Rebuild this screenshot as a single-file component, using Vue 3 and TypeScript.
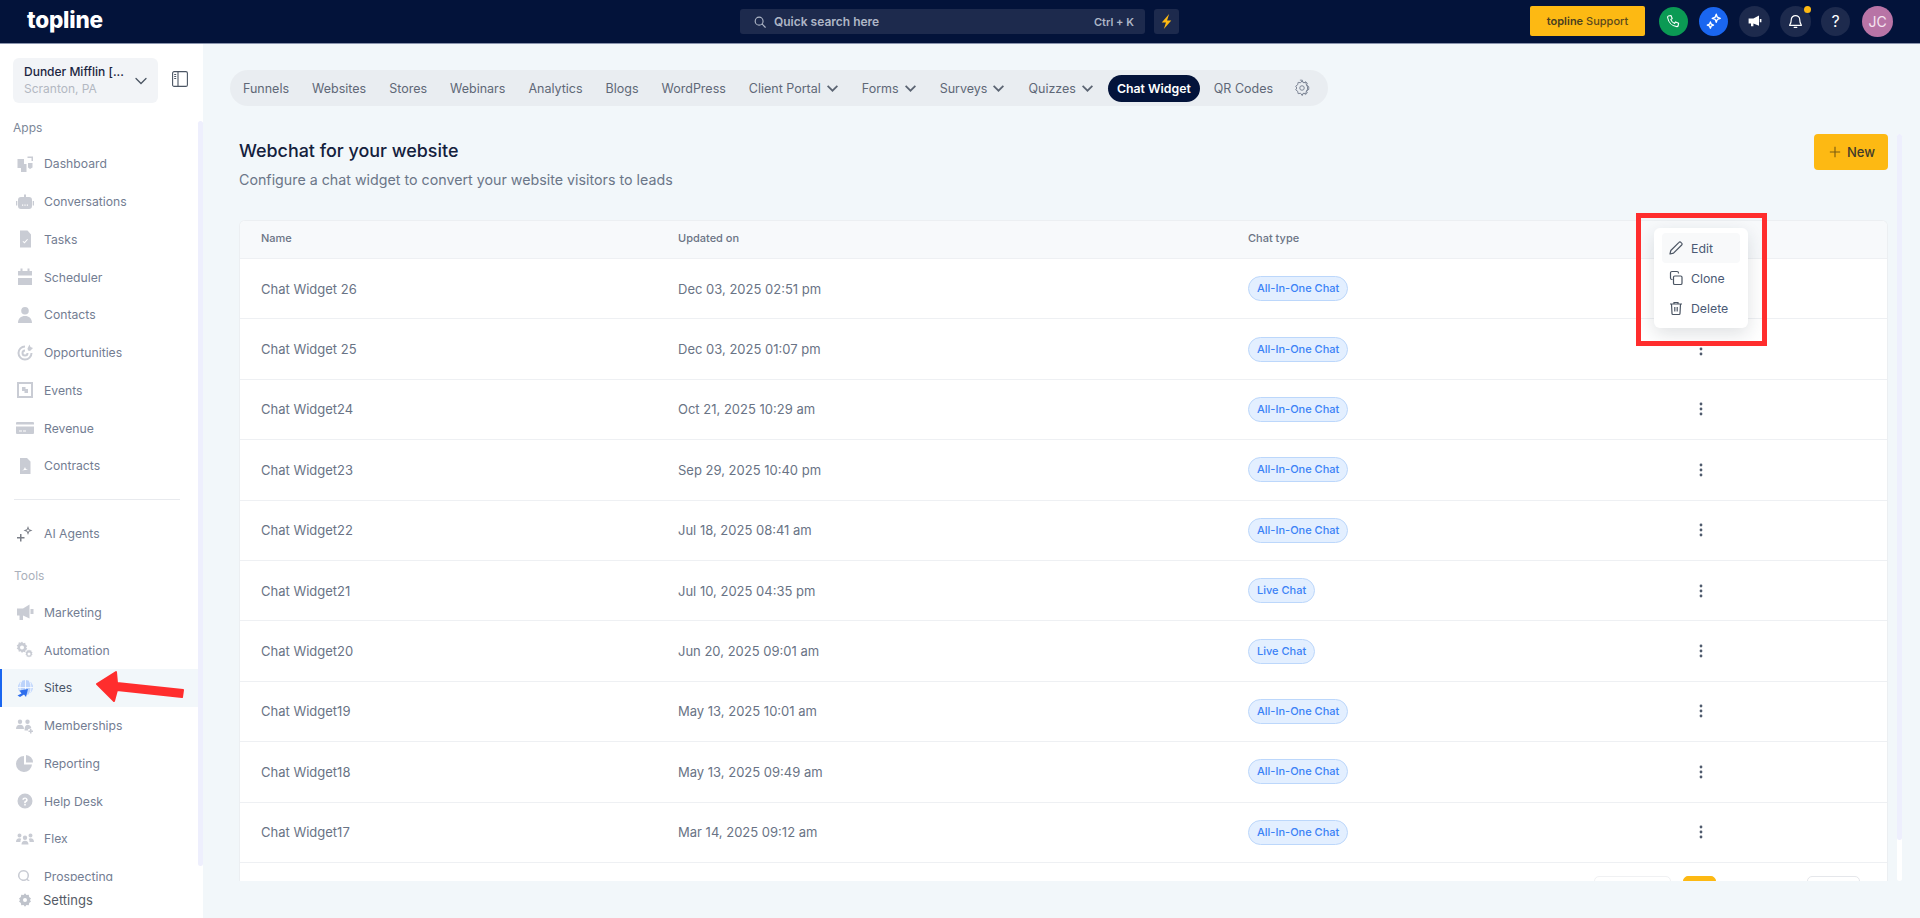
<script setup lang="ts">
type NavItem = { label: string; icon: string; active?: boolean };

const appItems: NavItem[] = [
  { label: 'Dashboard', icon: 'M2.500 5H9v5h2.500v8H6v-4H2.500zM12.500 2.500H18V7h-1.500V4h-4zM13 9h4.500v4.500L15 15l-2-1.500z' },
  { label: 'Conversations', icon: 'M9 2.500h2V5h3a3 3 0 0 1 3 3v6a3 3 0 0 1-3 3H6a3 3 0 0 1-3-3V8a3 3 0 0 1 3-3h3zM7 12.500v1.200h1.200v-1.200zM9.400 12.500v1.200h1.200v-1.200zM11.800 12.500v1.200H13v-1.200zM1 9h1.300v4.500H1zM17.700 9H19v4.500h-1.300z' },
  { label: 'Tasks', icon: 'M5 1.500h7.500L16 5.500v13H5zM7.500 12.500l2 2 3.500-4-.8-.6-2.800 3.200-1.200-1.200z' },
  { label: 'Scheduler', icon: 'M5.500 1.500h2V4h5V1.500h2V4H17v4.500H3V4h2.500zM3 11h14v7H3z' },
  { label: 'Contacts', icon: 'M10 2a3.800 3.800 0 1 1 0 7.600A3.800 3.800 0 0 1 10 2zM3 18c0-4.500 3-7 7-7s7 2.500 7 7z' },
  { label: 'Opportunities', icon: 'M10 2.500a7.500 7.500 0 1 0 7.500 7.500h-2A5.500 5.500 0 1 1 10 4.500zM10 6.500a3.500 3.500 0 1 0 3.500 3.500h-2a1.500 1.500 0 1 1-1.500-1.500zM14.500 1.500l1 2.500 2.500 1-3 3-2-.5-.5-2z' },
  { label: 'Events', icon: 'M2 2h16v16H2zM4 4v12h12V4zM7 7h3.500v2H13v4H9.500v-2H7z' },
  { label: 'Revenue', icon: 'M1 5a1 1 0 0 1 1-1h16a1 1 0 0 1 1 1v1.500H1zM1 8.500h18V15a1 1 0 0 1-1 1H2a1 1 0 0 1-1-1zM4 12.500v1h3v-1zM8 12.500v1h3v-1z' },
  { label: 'Contracts', icon: 'M5 2h7l3.500 3.500V18H5zM7 14.500c1.500-.5 2.500-2 3-3.500.5 1.500 1 2.500 3 3-2 0-4 0-6 .5z' },
];

const agentIcon =
  'M5 10v3H2v1.500h3v3h1.500v-3h3V13h-3v-3zM13 2l1.200 3.300L17.500 6.500l-3.300 1.200L13 11l-1.200-3.300L8.500 6.500l3.300-1.200zM13 4.800l-.6 1.100-1.100.6 1.100.6.6 1.100.6-1.100 1.100-.6-1.100-.6z';

const toolItems: NavItem[] = [
  { label: 'Marketing', icon: 'M2 6.500h6l6.500-4v14L8 13.500V18H4.500v-4.500H2zM15.500 7h3v5h-3z' },
  { label: 'Automation', icon: 'M7 1.500l1.200 1.700 2-.4.400 2 1.700 1.200-1.200 1.500 1.200 1.500-1.700 1.200-.4 2-2-.4L7 13l-1.200-1.700-2 .4-.4-2L1.700 8.500 2.900 7 1.700 5.500l1.700-1.200.4-2 2 .4zM7 5.500a2 2 0 1 0 0 4 2 2 0 0 0 0-4zM14 9.500l.8 1.100 1.400-.3.300 1.400 1.100.8-.8 1 .8 1-1.100.8-.3 1.400-1.400-.3-.8 1.100-.8-1.100-1.400.3-.3-1.400-1.100-.8.8-1-.8-1 1.100-.8.300-1.400 1.400.3zM14 12.500a1.500 1.500 0 1 0 0 3 1.500 1.500 0 0 0 0-3z' },
  { label: 'Sites', icon: '', active: true },
  { label: 'Memberships', icon: 'M5 3.500a2.200 2.200 0 1 1 0 4.400 2.200 2.200 0 0 1 0-4.400zM12.500 3.500a2.200 2.200 0 1 1 0 4.400 2.200 2.200 0 0 1 0-4.400zM1 13c0-2.800 1.500-4.300 4-4.300s4 1.500 4 4.300zM9.500 14.500c0-3.500 1-5.800 3-5.800s3.800 1.500 3.800 3.500l-3.300 1v1.300zM15 13h1.500v1.500H18V16h-1.500v1.500H15V16h-1.500v-1.500H15z' },
  { label: 'Reporting', icon: 'M9 3v8.500h8A8 8 0 1 1 9 3zM11 2a7.500 7.500 0 0 1 7 7.500h-7z' },
  { label: 'Help Desk', icon: 'M10 2.500a7.500 7.500 0 1 1 0 15 7.500 7.500 0 0 1 0-15zM9.200 12.200h1.600v-.7c1-.5 1.900-1.200 1.900-2.500 0-1.500-1.200-2.500-2.700-2.500S7.400 7.400 7.300 8.800h1.600c.1-.6.500-1 1.100-1s1.100.4 1.100 1-.6 1-1.900 1.600zM9.200 13h1.600v1.500H9.200z' },
  { label: 'Flex', icon: 'M4.500 4.500a2 2 0 1 1 0 4 2 2 0 0 1 0-4zM15.500 4.500a2 2 0 1 1 0 4 2 2 0 0 1 0-4zM10 6.500a2.200 2.200 0 1 1 0 4.400 2.200 2.200 0 0 1 0-4.400zM1 13c0-2.300 1.200-3.800 3.500-3.800.7 0 1.300.2 1.800.5-.6.800-.9 1.900-.9 3.300zM19 13c0-2.300-1.200-3.800-3.500-3.800-.7 0-1.300.2-1.800.5.6.8.9 1.900.9 3.300zM6.500 15.500c0-2.400 1.200-3.800 3.500-3.800s3.500 1.400 3.500 3.800z' },
  { label: 'Prospecting', icon: 'M8.500 3a5.500 5.500 0 0 1 4.300 8.900l4.200 4.200-1 1-4.200-4.200A5.500 5.500 0 1 1 8.500 3zm0 1.500a4 4 0 1 0 0 8 4 4 0 0 0 0-8z' },
];

const tabs = [
  { label: 'Funnels' },
  { label: 'Websites' },
  { label: 'Stores' },
  { label: 'Webinars' },
  { label: 'Analytics' },
  { label: 'Blogs' },
  { label: 'WordPress' },
  { label: 'Client Portal', caret: true },
  { label: 'Forms', caret: true },
  { label: 'Surveys', caret: true },
  { label: 'Quizzes', caret: true },
  { label: 'Chat Widget', active: true },
  { label: 'QR Codes' },
];

const rows = [
  { name: 'Chat Widget 26', updated: 'Dec 03, 2025 02:51 pm', type: 'All-In-One Chat' },
  { name: 'Chat Widget 25', updated: 'Dec 03, 2025 01:07 pm', type: 'All-In-One Chat' },
  { name: 'Chat Widget24', updated: 'Oct 21, 2025 10:29 am', type: 'All-In-One Chat' },
  { name: 'Chat Widget23', updated: 'Sep 29, 2025 10:40 pm', type: 'All-In-One Chat' },
  { name: 'Chat Widget22', updated: 'Jul 18, 2025 08:41 am', type: 'All-In-One Chat' },
  { name: 'Chat Widget21', updated: 'Jul 10, 2025 04:35 pm', type: 'Live Chat' },
  { name: 'Chat Widget20', updated: 'Jun 20, 2025 09:01 am', type: 'Live Chat' },
  { name: 'Chat Widget19', updated: 'May 13, 2025 10:01 am', type: 'All-In-One Chat' },
  { name: 'Chat Widget18', updated: 'May 13, 2025 09:49 am', type: 'All-In-One Chat' },
  { name: 'Chat Widget17', updated: 'Mar 14, 2025 09:12 am', type: 'All-In-One Chat' },
];
</script>

<template>
  <div class="app">
    <header class="topbar">
      <div class="logo">topline</div>
      <div class="search-wrap">
        <div class="search">
          <svg class="search-icon" viewBox="0 0 16 16" width="14" height="14" fill="none" stroke="#aeb6c6" stroke-width="1.300">
            <circle cx="7" cy="7" r="4.500" />
            <path d="M10.500 10.500l3.500 3.500" stroke-linecap="round" />
          </svg>
          <span class="search-text">Quick search here</span>
          <span class="search-key">Ctrl + K</span>
        </div>
        <div class="bolt">
          <svg viewBox="0 0 16 16" width="17" height="17"><path d="M10.500 1L3.500 9h4l-2 6 7-8h-4z" fill="#fdb913" /></svg>
        </div>
      </div>
      <div class="top-actions">
        <button class="support"><b>topline</b> Support</button>
        <span class="circle green">
          <svg viewBox="0 0 20 20" width="17" height="17" fill="none" stroke="#fff" stroke-width="1.300" stroke-linejoin="round">
            <path d="M4 3.500l3-.5 1.500 3.500-1.700 1.300c.8 2 2.400 3.600 4.400 4.400l1.300-1.700 3.500 1.500-.5 3c-.2.700-.8 1-1.500 1C8.300 15.500 4 11 3 5c0-.7.300-1.300 1-1.500z" />
          </svg>
        </span>
        <span class="circle blue">
          <svg viewBox="0 0 20 20" width="18" height="18" fill="none" stroke="#fff" stroke-width="1.500" stroke-linejoin="round">
            <path d="M12.500 2.500l1.200 3.300 3.300 1.200-3.300 1.200-1.200 3.300-1.200-3.300L8 7l3.300-1.200z" />
            <path d="M6 11l1 2.500 2.500 1L7 15.500 6 18l-1-2.500-2.500-1L5 13.500z" />
          </svg>
        </span>
        <span class="circle dark big">
          <svg viewBox="0 0 20 20" width="16" height="16"><path d="M2 7h6l7-4v13l-7-3v3.500H5V13H2zM16 7.500h2v4h-2z" fill="#fff" /></svg>
        </span>
        <span class="circle dark big bell">
          <svg viewBox="0 0 20 20" width="17" height="17" fill="none" stroke="#fff" stroke-width="1.400" stroke-linejoin="round">
            <path d="M10 3a5 5 0 0 1 5 5c0 4 1.500 5.500 2 6.500H3c.5-1 2-2.500 2-6.500a5 5 0 0 1 5-5z" />
            <path d="M8.500 17h3" stroke-linecap="round" />
          </svg>
          <i class="dot"></i>
        </span>
        <span class="circle dark help">?</span>
        <span class="circle avatar">JC</span>
      </div>
    </header>

    <div class="body">
      <aside class="sidebar">
        <div class="side-head">
          <div class="switcher">
            <div class="switcher-text">
              <div class="company">Dunder Mifflin [...</div>
              <div class="place">Scranton, PA</div>
            </div>
            <svg viewBox="0 0 16 16" width="16" height="16" fill="none" stroke="#4b5563" stroke-width="1.300"><path d="M3 5.500l5 5 5-5" stroke-linecap="round" /></svg>
          </div>
          <svg class="toggle" viewBox="0 0 16 16" width="16" height="16" fill="none" stroke="#4b5563" stroke-width="1.100">
            <rect x="0.600" y="0.600" width="14.800" height="14.800" rx="1.500" />
            <path d="M6 .6v14.800M2.200 3.500h2M2.200 5.500h2M2.200 7.500h2" />
          </svg>
        </div>

        <div class="nav-wrap">
          <nav class="nav">
            <div class="nav-label">Apps</div>
            <a v-for="item in appItems" :key="item.label" class="nav-item">
              <svg viewBox="0 0 20 20" width="20" height="20"><path :d="item.icon" fill="#c9ccd4" fill-rule="evenodd" /></svg>
              <span>{{ item.label }}</span>
            </a>
            <div class="nav-divider"></div>
            <a class="nav-item">
              <svg viewBox="0 0 20 20" width="20" height="20"><path :d="agentIcon" fill="#7b7f88" fill-rule="evenodd" /></svg>
              <span>AI Agents</span>
            </a>
            <div class="nav-label tools">Tools</div>
            <a v-for="item in toolItems" :key="item.label" class="nav-item" :class="{ active: item.active }">
              <svg v-if="item.active" viewBox="0 0 20 20" width="20" height="20">
                <circle cx="10.500" cy="9.500" r="7.500" fill="#bcd3fb" />
                <path d="M3 9.500h15M10.500 2v15M6.500 3c-2 4-2 9 0 13M14.500 3c2 4 2 9 0 13" stroke="#fff" stroke-width="0.800" fill="none" />
                <path d="M2.500 17.500l4-2-2-3 8.500-1.500-2 8-2-2.500-4 2.500z" fill="#2f6fed" />
              </svg>
              <svg v-else viewBox="0 0 20 20" width="20" height="20"><path :d="item.icon" fill="#c9ccd4" fill-rule="evenodd" /></svg>
              <span>{{ item.label }}</span>
            </a>
          </nav>
          <div class="nav-scroll"></div>
        </div>

        <div class="settings">
          <svg viewBox="0 0 20 20" width="16" height="16">
            <path d="M10 1.500l1.800 2.300 2.900-.5.500 2.900 2.300 1.800-1.300 2 1.300 2-2.300 1.800-.5 2.900-2.900-.5-1.800 2.300-1.800-2.300-2.900.5-.5-2.900-2.300-1.800 1.300-2-1.300-2 2.300-1.800.5-2.900 2.900.5zM10 7.500a2.500 2.500 0 1 0 0 5 2.500 2.500 0 0 0 0-5z" fill="#bfc3cb" fill-rule="evenodd" />
          </svg>
          <span>Settings</span>
        </div>
      </aside>

      <main class="main">
        <div class="tabs">
          <span v-for="tab in tabs" :key="tab.label" class="tab" :class="{ active: tab.active }">
            {{ tab.label }}
            <svg v-if="tab.caret" viewBox="0 0 12 12" width="13" height="13" fill="none" stroke="#5b6472" stroke-width="1.600"><path d="M1.500 3.500L6 8l4.500-4.500" /></svg>
          </span>
          <svg class="tabs-gear" viewBox="0 0 20 20" width="18" height="18" fill="none" stroke="#7b8494" stroke-width="1.100" stroke-linejoin="round">
            <path d="M8.500 2h3l.5 2.300 1.800.8 2-1.200 2 2.100-1.200 2 .8 1.800 2.100.5v3l-2.200.5-.7 1.800 1.200 2-2.100 2-2-1.200-1.800.7-.5 2.200" transform="translate(0 -0.500) scale(0.900)" />
            <path d="M10 2l1.600 2.200 2.700-.5.500 2.700L17 8l-1.200 2 1.200 2-2.200 1.600-.5 2.700-2.700-.5L10 18l-1.600-2.200-2.700.5-.5-2.700L3 12l1.200-2L3 8l2.200-1.600.5-2.700 2.700.5z" />
            <circle cx="10" cy="10" r="2.500" />
          </svg>
        </div>

        <div class="page-row">
          <div class="page">
            <div class="page-head">
              <div>
                <h1>Webchat for your website</h1>
                <p>Configure a chat widget to convert your website visitors to leads</p>
              </div>
              <button class="new-btn">
                <svg viewBox="0 0 14 14" width="12" height="12" fill="none" stroke="#7a5c10" stroke-width="1.300"><path d="M7 1v12M1 7h12" /></svg>
                New
              </button>
            </div>

            <section class="card">
              <div class="row head-row">
                <span>Name</span>
                <span>Updated on</span>
                <span>Chat type</span>
                <span></span>
              </div>
              <div v-for="row in rows" :key="row.name" class="row">
                <span>{{ row.name }}</span>
                <span>{{ row.updated }}</span>
                <span><em class="pill">{{ row.type }}</em></span>
                <svg class="dots" viewBox="0 0 4 14" width="4" height="14" fill="#4f5b6d">
                  <circle cx="2" cy="2" r="1.400" />
                  <circle cx="2" cy="7" r="1.400" />
                  <circle cx="2" cy="12" r="1.400" />
                </svg>
              </div>
              <div class="pager">
                <span class="page-btn prev"></span>
                <span class="page-btn current"></span>
                <span class="page-btn next"></span>
              </div>
            </section>
          </div>
          <div class="page-scroll"><div class="page-thumb"></div></div>
        </div>
      </main>
    </div>

    <div class="menu">
      <div class="menu-item hover">
        <svg viewBox="0 0 16 16" width="16" height="16" fill="none" stroke="#4b5563" stroke-width="1.200" stroke-linejoin="round">
          <path d="M2 14l.8-3.500L11 2.300a1.300 1.300 0 0 1 1.900 0l.8.800a1.300 1.300 0 0 1 0 1.900L5.500 13.200z" />
        </svg>
        Edit
      </div>
      <div class="menu-item">
        <svg viewBox="0 0 16 16" width="16" height="16" fill="none" stroke="#4b5563" stroke-width="1.200">
          <rect x="5.500" y="6" width="8.500" height="8.500" rx="1.300" />
          <path d="M10.500 3.500V3A1.500 1.500 0 0 0 9 1.500H4A1.500 1.500 0 0 0 2.500 3v5A1.500 1.500 0 0 0 4 9.500h.5" />
        </svg>
        Clone
      </div>
      <div class="menu-item">
        <svg viewBox="0 0 16 16" width="16" height="16" fill="none" stroke="#4b5563" stroke-width="1.200">
          <path d="M2 4h12M6 4V2.500h4V4M3.500 4l.5 9.500a1 1 0 0 0 1 1h6a1 1 0 0 0 1-1l.5-9.500M6.800 7v4.500M9.200 7v4.500" />
        </svg>
        Delete
      </div>
    </div>

    <div class="mark-box"></div>
    <svg class="mark-arrow" viewBox="0 0 96 40" width="96" height="40">
      <path d="M5 17L24 5l1 11 66 7-1 7-65-7-3 11z" fill="#ff2d2d" stroke="#ff2d2d" stroke-width="2" stroke-linejoin="round" />
    </svg>
  </div>
</template>

<style>
html,
body {
  margin: 0;
  background: #f2f7fa;
}
</style>

<style scoped>
* {
  box-sizing: border-box;
}

.app {
  position: relative;
  width: 1920px;
  height: 918px;
  overflow: hidden;
  display: flex;
  flex-direction: column;
  font-family: Inter, "Liberation Sans", sans-serif;
  background: #f2f7fa;
}

.topbar {
  height: 44px;
  flex: none;
  display: flex;
  align-items: center;
  background: #03133a;
  border-bottom: 1px solid #8a94ad;
  padding: 0 27px 1px 27px;
}

.logo {
  width: 713px;
  color: #fff;
  font-size: 22.500px;
  font-weight: 800;
  letter-spacing: -0.2px;
  line-height: 1;
  margin-top: -1px;
}

.search-wrap {
  display: flex;
  gap: 9px;
  height: 25px;
  margin-top: 1px;
}

.search {
  width: 405px;
  display: flex;
  align-items: center;
  background: #1d2a4d;
  border-radius: 3px;
  padding: 0 11px 0 13px;
}

.search-icon {
  margin-right: 7px;
}

.search-text {
  flex: 1;
  color: #aeb6c6;
  font-size: 12px;
  font-weight: 600;
}

.search-key {
  color: #aeb6c6;
  font-size: 11px;
  font-weight: 600;
}

.bolt {
  width: 25px;
  display: flex;
  align-items: center;
  justify-content: center;
  background: #1d2a4d;
  border-radius: 3px;
}

.top-actions {
  margin-left: auto;
  display: flex;
  align-items: center;
}

.support {
  width: 115px;
  height: 30px;
  border: 0;
  border-radius: 2px;
  background: #fdb913;
  color: #5c4a1c;
  font: 500 11px Inter, "Liberation Sans", sans-serif;
  margin-right: 14px;
}

.support b {
  font-weight: 600;
  color: #4a3f20;
}

.circle {
  position: relative;
  width: 29px;
  height: 29px;
  border-radius: 50%;
  display: flex;
  align-items: center;
  justify-content: center;
  color: #fff;
  margin-right: 11px;
}

.green {
  background: #0b9a54;
}

.blue {
  background: #1a66f0;
  margin-right: 11px;
}

.dark {
  background: #1d2a4d;
}

.big {
  width: 31px;
  height: 31px;
  margin-right: 10px;
}

.dot {
  position: absolute;
  top: 0;
  right: 0;
  width: 7px;
  height: 7px;
  border-radius: 50%;
  background: #fdb913;
}

.help {
  font-size: 16px;
  margin-right: 12px;
}

.avatar {
  width: 31px;
  height: 31px;
  margin-right: 0;
  background: #b874a6;
  color: #f6e6f1;
  font-size: 14px;
}

.body {
  flex: 1;
  min-height: 0;
  display: flex;
}

.sidebar {
  width: 203px;
  flex: none;
  display: flex;
  flex-direction: column;
  background: #fff;
}

.side-head {
  display: flex;
  align-items: flex-start;
  padding: 14px 0 0 13px;
}

.switcher {
  width: 145px;
  height: 45px;
  display: flex;
  align-items: center;
  justify-content: space-between;
  padding: 0 9px 0 11px;
  background: #f2f4f7;
  border-radius: 6px;
}

.company {
  font-size: 12px;
  font-weight: 500;
  color: #1b2540;
  line-height: 16px;
}

.place {
  font-size: 12px;
  color: #b3b8c2;
  line-height: 16px;
  margin-top: 1px;
}

.toggle {
  margin: 13px 0 0 14px;
}

.nav-wrap {
  flex: 1;
  min-height: 0;
  display: flex;
  margin-top: 18px;
}

.nav {
  flex: 1;
  overflow: hidden;
}

.nav-scroll {
  width: 5px;
  height: 745px;
  background: #eeeffd;
  border-radius: 3px;
}

.nav-label {
  height: 14px;
  padding-left: 13px;
  margin-bottom: 10px;
  font-size: 12px;
  line-height: 14px;
  color: #7c8798;
}

.nav-label.tools {
  margin: 16px 0 11px;
  padding-left: 14px;
  color: #aab0bb;
}

.nav-item {
  height: 37.750px;
  display: flex;
  align-items: center;
  gap: 9px;
  padding-left: 15px;
  font-size: 12.200px;
  color: #737d92;
}

.nav-item.active {
  background: #f2f7fa;
  border-left: 2px solid #1a66f0;
  padding-left: 13px;
  color: #4a5568;
}

.nav-divider {
  height: 1px;
  margin: 14px 18px 15px 14px;
  background: #e8eaee;
}

.settings {
  height: 37px;
  flex: none;
  display: flex;
  align-items: center;
  gap: 10px;
  padding-left: 17px;
  font-size: 13px;
  color: #555b66;
}

.main {
  flex: 1;
  min-width: 0;
  display: flex;
  flex-direction: column;
  padding: 26px 18px 37px 27px;
}

.tabs {
  width: 1098px;
  height: 36px;
  flex: none;
  display: flex;
  align-items: center;
  gap: 5px;
  padding: 0 4px;
  background: #e9edf1;
  border-radius: 18px;
}

.tab {
  height: 27px;
  display: flex;
  align-items: center;
  gap: 5px;
  padding: 0 9px;
  font-size: 12.500px;
  color: #5f6877;
  border-radius: 14px;
  white-space: nowrap;
}

.tab.active {
  background: #03133a;
  color: #fff;
  font-size: 12.300px;
  font-weight: 600;
}

.tabs-gear {
  flex: none;
  margin-left: 6px;
}

.page-row {
  flex: 1;
  min-height: 0;
  display: flex;
  margin-top: 28px;
}

.page {
  flex: 1;
  min-width: 0;
  display: flex;
  flex-direction: column;
  padding-left: 9px;
}

.page-head {
  height: 86px;
  flex: none;
  display: flex;
  justify-content: space-between;
  align-items: flex-start;
}

h1 {
  margin: 5px 0 0;
  font-size: 17.900px;
  font-weight: 500;
  line-height: 24px;
  color: #14213d;
}

p {
  margin: 6px 0 0;
  font-size: 14.250px;
  line-height: 22px;
  color: #6b7688;
}

.new-btn {
  width: 74px;
  height: 36px;
  display: flex;
  align-items: center;
  justify-content: center;
  gap: 6px;
  border: 0;
  border-radius: 4px;
  padding: 0 0 0 2px;
  background: #fdb913;
  color: #3f3a2c;
  font: 500 13px Inter, "Liberation Sans", sans-serif;
}

.card {
  flex: 1;
  min-height: 0;
  overflow: hidden;
  background: #fff;
  border: 1px solid #eceff2;
  border-bottom: 0;
  border-radius: 6px 6px 0 0;
}

.row {
  height: 60.400px;
  display: grid;
  grid-template-columns: 417px 570px 453px 1fr;
  align-items: center;
  padding-left: 21px;
  border-bottom: 1px solid #eef0f3;
  font-size: 13px;
  color: #697385;
}

.head-row {
  height: 38px;
  padding-bottom: 4px;
  background: #f7f9fb;
  font-size: 11px;
  font-weight: 500;
  color: #6b7485;
}

.pill {
  display: inline-block;
  height: 25px;
  line-height: 23px;
  padding: 0 8px;
  font-style: normal;
  font-size: 11px;
  font-weight: 500;
  color: #3b82f6;
  background: #e3efff;
  border: 1px solid #bcd7fb;
  border-radius: 13px;
}

.dots {
  margin-left: -2px;
}

.pager {
  display: flex;
  padding: 13px 0 0 1354px;
}

.page-btn {
  height: 30px;
  background: #fff;
  border: 1px solid #e5e7eb;
  border-radius: 5px;
}

.prev {
  width: 77px;
  border-color: #f0f1f3;
}

.current {
  width: 33px;
  margin-left: 12px;
  background: #fdb913;
  border-color: #fdb913;
}

.next {
  width: 53px;
  margin-left: 91px;
}

.page-scroll {
  width: 5px;
  flex: none;
  margin-left: 9px;
  background: #fff;
  border-radius: 3px;
}

.page-thumb {
  height: 706px;
  background: #eeeffd;
  border-radius: 3px;
}

.menu {
  position: absolute;
  left: 1654px;
  top: 228px;
  width: 94px;
  height: 100px;
  padding: 5px 8px;
  background: #fff;
  border-radius: 6px;
  box-shadow: 0 6px 18px rgba(30, 41, 59, 0.14);
}

.menu-item {
  height: 30px;
  display: flex;
  align-items: center;
  gap: 7px;
  padding-left: 6px;
  border-radius: 4px;
  font-size: 12.300px;
  color: #4b5a75;
}

.menu-item.hover {
  background: #f8f9fa;
}

.mark-box {
  position: absolute;
  left: 1636px;
  top: 213px;
  width: 131px;
  height: 133px;
  border: 5px solid #ff2d2d;
}

.mark-arrow {
  position: absolute;
  left: 92px;
  top: 667px;
}
</style>
